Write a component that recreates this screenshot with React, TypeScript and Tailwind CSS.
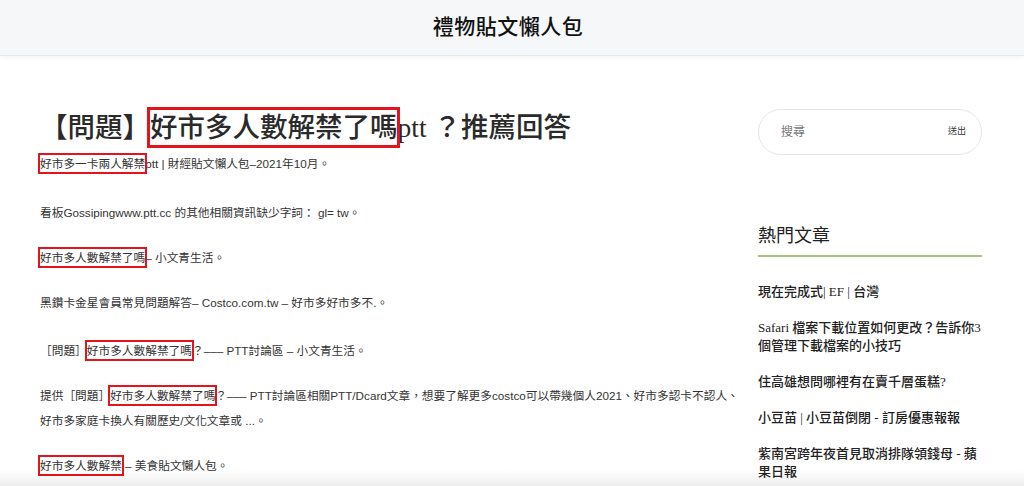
import React from "react";

const serif = "font-['Liberation_Serif','Noto_Sans_CJK_TC',serif]";
const sans = "font-['Liberation_Sans','Noto_Sans_CJK_TC',sans-serif]";

// 紅框標註
function Mark({ children, thick }: { children: React.ReactNode; thick?: boolean }) {
  return (
    <span className="relative">
      {children}
      <span
        className={
          thick
            ? "absolute -left-[3px] -right-[2px] -top-[5px] -bottom-[5px] border-[3px] border-[#e3141b]"
            : "absolute -left-[2px] -right-[2px] -top-[4px] -bottom-[4px] border-2 border-[#e3141b]"
        }
      />
    </span>
  );
}

const popular = [
  "現在完成式| EF | 台灣",
  "Safari 檔案下載位置如何更改？告訴你3個管理下載檔案的小技巧",
  "住高雄想問哪裡有在賣千層蛋糕?",
  "小豆苗 | 小豆苗倒閉 - 訂房優惠報報",
  "紫南宮跨年夜首見取消排隊領錢母 - 蘋果日報",
];

export default function App() {
  return (
    <div className="relative h-[486px] overflow-hidden bg-white text-[#222]">
      <header className="flex h-[56px] items-center justify-center border-b border-[#e4e6e9] bg-[#f6f7f9] shadow-[0_2px_4px_rgba(0,0,0,0.04)]">
        <h1 className={`${serif} -ml-[8px] text-[21px] font-medium tracking-[0.5px] text-[#111]`}>禮物貼文懶人包</h1>
      </header>

      <div className="flex gap-[18px] px-[40px]">
        <main className="w-[700px] shrink-0 pt-[52px]">
          <h2 className={`${serif} text-[27.5px] leading-[40px] font-medium text-[#2a2a2a]`}>
            【問題】<Mark thick>好市多人數解禁了嗎</Mark>ptt ？推薦回答
          </h2>
          <div className={`${sans} mt-[3px] text-[11.7px] leading-[25px] text-[#333]`}>
            <p className="mb-[24px]">
              <Mark>好市多一卡兩人解禁</Mark>ptt | 財經貼文懶人包–2021年10月。
            </p>
            <p className="mb-[20px]">看板Gossipingwww.ptt.cc 的其他相關資訊缺少字詞： gl= tw。</p>
            <p className="mb-[20px]">
              <Mark>好市多人數解禁了嗎</Mark>– 小文青生活。
            </p>
            <p className="mb-[23px]">黑鑽卡金星會員常見問題解答– Costco.com.tw – 好市多好市多不.。</p>
            <p className="mb-[20px]">
              ［問題］<Mark>好市多人數解禁了嗎</Mark>？––– PTT討論區 – 小文青生活。
            </p>
            <p className="mb-[20px]">
              提供［問題］<Mark>好市多人數解禁了嗎</Mark>？––– PTT討論區相關PTT/Dcard文章，想要了解更多costco可以帶幾個人2021、好市多認卡不認人、好市多家庭卡換人有關歷史/文化文章或 ...。
            </p>
            <p>
              <Mark>好市多人數解禁</Mark> – 美食貼文懶人包。
            </p>
          </div>
        </main>

        <aside className="w-[224px] shrink-0 pt-[53px]">
          <div className="flex h-[46px] items-center justify-between rounded-full border border-[#e6e6e6] pl-[22px] pr-[15px]">
            <span className={`${sans} text-[12px] text-[#777]`}>搜尋</span>
            <span className={`${sans} text-[9px] text-[#333]`}>送出</span>
          </div>

          <h3 className={`${serif} mt-[68px] border-b-2 border-[#a9c27a] pb-[6px] text-[18px] leading-[26px] text-[#222]`}>
            熱門文章
          </h3>

          <ul className={`${serif} mt-[26px] flex flex-col gap-[18px] text-[13px] leading-[18px] font-medium text-[#222]`}>
            {popular.map((t) => (
              <li key={t}>{t}</li>
            ))}
          </ul>
        </aside>
      </div>

      <div className="pointer-events-none absolute inset-x-0 bottom-0 h-[16px] bg-gradient-to-t from-[rgba(0,0,0,0.07)] to-transparent" />
    </div>
  );
}
